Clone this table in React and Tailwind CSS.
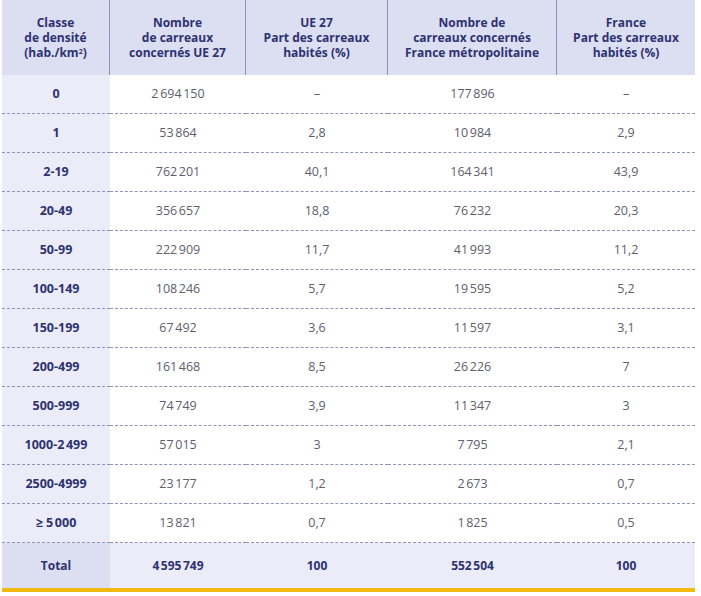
const NB = "\u202f";

const rows = [
  ["0", `2${NB}694${NB}150`, "–", `177${NB}896`, "–"],
  ["1", `53${NB}864`, "2,8", `10${NB}984`, "2,9"],
  ["2-19", `762${NB}201`, "40,1", `164${NB}341`, "43,9"],
  ["20-49", `356${NB}657`, "18,8", `76${NB}232`, "20,3"],
  ["50-99", `222${NB}909`, "11,7", `41${NB}993`, "11,2"],
  ["100-149", `108${NB}246`, "5,7", `19${NB}595`, "5,2"],
  ["150-199", `67${NB}492`, "3,6", `11${NB}597`, "3,1"],
  ["200-499", `161${NB}468`, "8,5", `26${NB}226`, "7"],
  ["500-999", `74${NB}749`, "3,9", `11${NB}347`, "3"],
  [`1000-2${NB}499`, `57${NB}015`, "3", `7${NB}795`, "2,1"],
  ["2500-4999", `23${NB}177`, "1,2", `2${NB}673`, "0,7"],
  [`≥ 5${NB}000`, `13${NB}821`, "0,7", `1${NB}825`, "0,5"],
];

const headers = [
  ["Classe", "de densité", <>(hab./km<sup className="text-[7px]">2</sup>)</>],
  ["Nombre", "de carreaux", "concernés UE 27"],
  ["UE 27", "Part des carreaux", "habités (%)"],
  ["Nombre de", "carreaux concernés", "France métropolitaine"],
  ["France", "Part des carreaux", "habités (%)"],
];

export default function App() {
  return (
    <div className="w-[701px] h-[596px] bg-white pl-[2px] font-['Open_Sans',sans-serif]">
      <div className="grid w-[693px] grid-cols-[108px_136px_142px_169px_138px]">
        {/* Header */}
        {headers.map((h, i) => (
          <div
            key={i}
            className={`h-[75px] bg-[#dcdef2] flex flex-col items-center justify-center text-center text-[12px] leading-[15px] font-bold text-[#2d3270] ${i < 4 ? "border-r border-[#8f92b9]" : ""}`}
          >
            {h.map((line, j) => (
              <div key={j}>{line}</div>
            ))}
          </div>
        ))}

        {/* Rows */}
        {rows.map((r, ri) =>
          r.map((c, ci) => (
            <div
              key={`${ri}-${ci}`}
              className={`h-[39px] flex items-center justify-center text-[12.5px] border-b border-dashed border-[#8f92b9] ${
                ci === 0
                  ? "bg-[#ececf8] font-bold text-[#2d3270]"
                  : "bg-white text-[#60606b]"
              }`}
            >
              {c}
            </div>
          ))
        )}

        {/* Total */}
        {["Total", `4${NB}595${NB}749`, "100", `552${NB}504`, "100"].map((c, i) => (
          <div
            key={i}
            className={`h-[45px] flex items-center justify-center text-[12px] font-bold text-[#2d3270] ${
              i === 0 ? "bg-[#dcdef2]" : "bg-[#ececf8]"
            }`}
          >
            {c}
          </div>
        ))}
      </div>
      <div className="w-[693px] h-[4px] bg-[#f2b90f]" />
    </div>
  );
}
